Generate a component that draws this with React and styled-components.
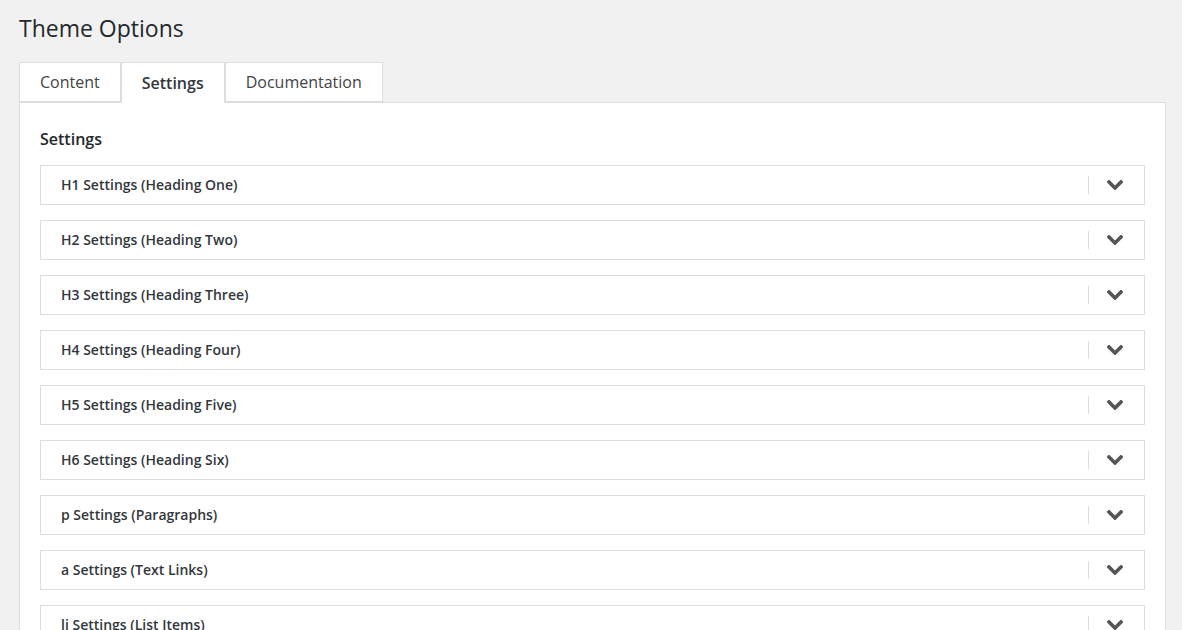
import React from 'react'
import styled, { createGlobalStyle } from 'styled-components'

const Global = createGlobalStyle`
  html, body {
    margin: 0;
    background: #f1f1f1;
    font-family: 'Open Sans', 'Noto Sans', sans-serif;
    color: #23282d;
  }
`

const Page = styled.div`
  padding: 10px 16px 0 19px;
  height: 630px;
  box-sizing: border-box;
  overflow: hidden;
`

const Title = styled.h1`
  margin: 0 0 16px;
  font-size: 23px;
  font-weight: 400;
  line-height: 36px;
  color: #23282d;
`

const Tabs = styled.div`
  display: flex;
  position: relative;
  z-index: 1;
  margin-bottom: -1px;
`

const Tab = styled.div`
  box-sizing: border-box;
  padding: 0 20px;
  display: flex;
  align-items: center;
  font-size: 16px;
  font-weight: ${p => (p.active ? 600 : 400)};
  color: ${p => (p.active ? '#32373c' : '#444')};
  background: #fff;
  border: 1px solid #ddd;
  border-bottom-color: ${p => (p.active ? '#fff' : '#ddd')};
  height: ${p => (p.active ? '41px' : '40px')};
  align-self: flex-start;
`

const Panel = styled.div`
  background: #fff;
  border: 1px solid #ddd;
  padding: 23px 20px 0;
  box-sizing: border-box;
`

const Heading = styled.h2`
  margin: 0 0 13px;
  font-size: 16px;
  font-weight: 600;
  line-height: 26px;
  color: #23282d;
`

const List = styled.div`
  display: flex;
  flex-direction: column;
  gap: 15px;
`

const Row = styled.div`
  height: 40px;
  box-sizing: border-box;
  border: 1px solid #ddd;
  display: flex;
  align-items: center;
  padding: 0 0 1px 20px;
`

const Label = styled.div`
  flex: 1;
  font-size: 14px;
  font-weight: 600;
  color: #32373c;
`

const Toggle = styled.div`
  width: 51px;
  margin-right: 4px;
  height: 18px;
  border-left: 1px solid #ddd;
  display: flex;
  align-items: center;
  justify-content: center;
`

const Chevron = () => (
  <svg width="16" height="10" viewBox="0 0 16 10">
    <path d="M2 2l6 6 6-6" fill="none" stroke="#555" strokeWidth="3.6" strokeLinecap="square" />
  </svg>
)

const items = [
  'H1 Settings (Heading One)',
  'H2 Settings (Heading Two)',
  'H3 Settings (Heading Three)',
  'H4 Settings (Heading Four)',
  'H5 Settings (Heading Five)',
  'H6 Settings (Heading Six)',
  'p Settings (Paragraphs)',
  'a Settings (Text Links)',
  'li Settings (List Items)',
]

export default function App() {
  return (
    <>
      <Global />
      <Page>
        <Title>Theme Options</Title>
        <Tabs>
          <Tab>Content</Tab>
          <Tab active>Settings</Tab>
          <Tab>Documentation</Tab>
        </Tabs>
        <Panel>
          <Heading>Settings</Heading>
          <List>
            {items.map(label => (
              <Row key={label}>
                <Label>{label}</Label>
                <Toggle>
                  <Chevron />
                </Toggle>
              </Row>
            ))}
          </List>
        </Panel>
      </Page>
    </>
  )
}
